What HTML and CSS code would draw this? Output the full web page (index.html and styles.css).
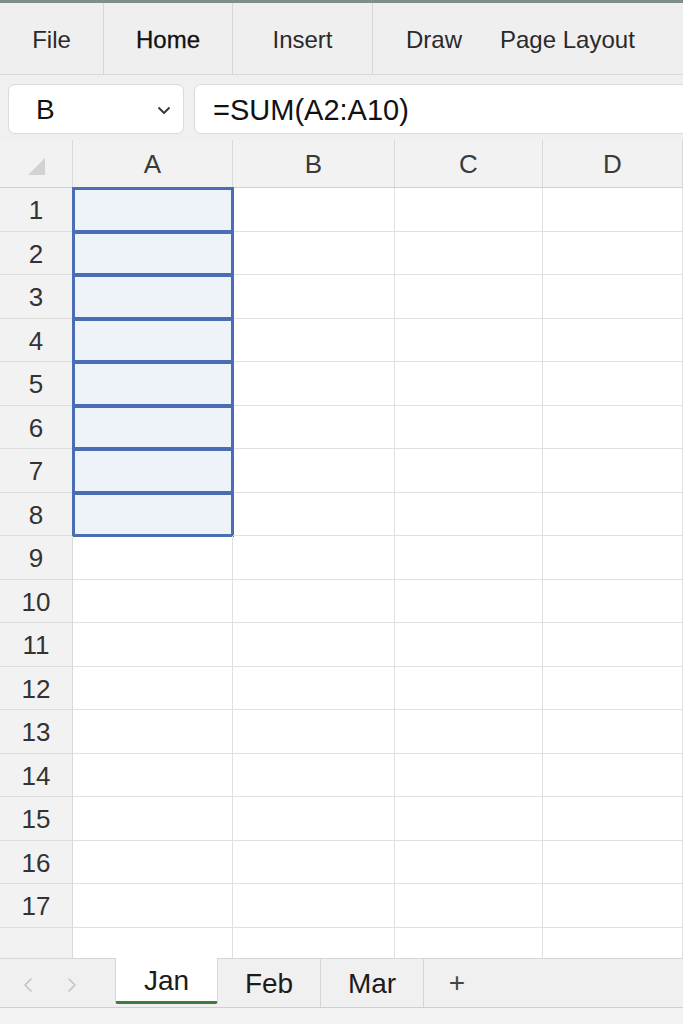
FILE: index.html
```html
<!DOCTYPE html>
<html lang="en">

	<head>
		<meta charset="UTF-8" />
		<meta name="viewport" content="width=device-width, initial-scale=1.0" />
		<title>Sheet</title>
		<link rel="stylesheet" href="styles.css">
	</head>

	<body>
		<div class="app">
			<div class="top-line"></div>

			<div class="ribbon">
				<div class="rtab w-file">File</div>
				<div class="rtab w-home">Home</div>
				<div class="rtab w-insert">Insert</div>
				<div class="rtab plain draw">Draw</div>
				<div class="rtab plain layout">Page Layout</div>
			</div>

			<div class="formula-bar">
				<div class="name-box">
					<span>B</span>
					<svg width="14" height="9" viewBox="0 0 14 9">
						<path d="M2 2 L7 7 L12 2" fill="none" stroke="#333" stroke-width="1.8" stroke-linecap="round" stroke-linejoin="round" />
					</svg>
				</div>
				<div class="formula-box">=SUM(A2:A10)</div>
			</div>

			<div class="grid" id="grid">
				<div class="hcell corner">
					<svg width="17" height="17" viewBox="0 0 17 17">
						<path d="M17 0 L17 17 L0 17 Z" fill="#d2d2d2" />
					</svg>
				</div>
				<div class="hcell">A</div>
				<div class="hcell">B</div>
				<div class="hcell">C</div>
				<div class="hcell">D</div>
			</div>

			<div class="tabs">
				<div class="nav">
					<svg width="12" height="18" viewBox="0 0 12 18">
						<path d="M9 3 L3 9 L9 15" fill="none" stroke="#c2c2c2" stroke-width="1.6" stroke-linecap="round" stroke-linejoin="round" />
					</svg>
					<svg width="12" height="18" viewBox="0 0 12 18">
						<path d="M3 3 L9 9 L3 15" fill="none" stroke="#c2c2c2" stroke-width="1.6" stroke-linecap="round" stroke-linejoin="round" />
					</svg>
				</div>
				<div class="stab active">Jan</div>
				<div class="stab">Feb</div>
				<div class="stab">Mar</div>
				<div class="add">+</div>
			</div>
			<div class="status"></div>
		</div>

		<script>
			// build the 17 rows + one partial row
			let grid = document.getElementById("grid");
			for (let r = 1; r <= 18; r++) {
				let head = document.createElement("div");
				head.className = "rhead" + (r == 18 ? " last" : "");
				head.textContent = r < 18 ? r : "";
				grid.append(head);
				for (let c = 0; c < 4; c++) {
					let cell = document.createElement("div");
					cell.className = "cell" + (r == 18 ? " last" : "");
					if (c == 0 && r <= 8) {
						cell.classList.add("sel");
					}
					grid.append(cell);
				}
			}
		</script>
	</body>

</html>
```

FILE: styles.css
```css
* {
	box-sizing: border-box;
}

body {
	margin: 0;
	font-family: "Liberation Sans", Arial, sans-serif;
	color: #222;
	background: #fff;
	overflow: hidden;
}

.app {
	width: 683px;
	height: 1024px;
	display: flex;
	flex-direction: column;
}

.top-line {
	height: 3px;
	background: #7d8f87;
}

.ribbon {
	height: 72px;
	display: flex;
	align-items: stretch;
	background: #efefef;
	border-bottom: 1px solid #d8d8d8;
}

.rtab {
	display: flex;
	align-items: center;
	justify-content: center;
	font-size: 24px;
	color: #2a2a2a;
	border-right: 1px solid #d6d6d6;
	padding-top: 3px;
}

.w-file {
	width: 104px;
}

.w-home {
	width: 129px;
	color: #111;
	-webkit-text-stroke: 0.3px #111;
}

.w-insert {
	width: 140px;
}

.rtab.plain {
	border-right: none;
}

.draw {
	padding-left: 33px;
}

.layout {
	padding-left: 38px;
}

.formula-bar {
	height: 65px;
	display: flex;
	padding: 9px 0 6px 8px;
	gap: 10px;
	background: #f0f0f0;
}

.name-box {
	width: 176px;
	display: flex;
	align-items: center;
	justify-content: space-between;
	padding: 2px 12px 0 27px;
	background: #fff;
	border: 1px solid #dadada;
	border-radius: 7px;
	font-size: 28px;
	color: #111;
}

.formula-box {
	flex: 1;
	display: flex;
	align-items: center;
	padding: 2px 0 0 18px;
	margin-right: -10px;
	background: #fff;
	border: 1px solid #dadada;
	border-radius: 7px;
	font-size: 29px;
	color: #111;
}

.grid {
	display: grid;
	grid-template-columns: 73px 160px 162px 148px 1fr;
	grid-template-rows: 48px repeat(17, 43.5px) 30.5px;
	background: #fff;
}

.hcell {
	display: flex;
	align-items: center;
	justify-content: center;
	background: #f2f2f2;
	border-right: 1px solid #d9d9d9;
	border-bottom: 1px solid #cfcfcf;
	font-size: 26px;
	color: #3a3a3a;
	padding-top: 2px;
}

.corner {
	justify-content: flex-end;
	align-items: flex-end;
	padding: 0 27px 12px 0;
}

.rhead {
	display: flex;
	align-items: center;
	justify-content: center;
	background: #f2f2f2;
	border-right: 1px solid #d9d9d9;
	border-bottom: 1px solid #dcdcdc;
	font-size: 26px;
	color: #333;
	padding-top: 3px;
}

.cell {
	border-right: 1px solid #e0e0e0;
	border-bottom: 1px solid #e0e0e0;
}

.rhead.last,
.cell.last {
	border-bottom: none;
}

.cell.sel {
	background: #eef2f9;
	outline: 3px solid #4a6db6;
	outline-offset: -2px;
}

.tabs {
	height: 50px;
	display: flex;
	align-items: stretch;
	background: #f0f0f0;
	border-top: 1px solid #d6d6d6;
	border-bottom: 1px solid #d0d0d0;
}

.nav {
	width: 115px;
	display: flex;
	align-items: center;
	gap: 32px;
	padding: 4px 0 0 22px;
}

.stab {
	width: 103px;
	display: flex;
	align-items: center;
	justify-content: center;
	font-size: 28px;
	color: #1c1c1c;
	border-right: 1px solid #d6d6d6;
	padding-top: 2px;
}

.stab.active {
	background: #fff;
	border-left: 1px solid #d6d6d6;
	border-bottom: 3px solid #3e7b3f;
	border-radius: 0 0 3px 3px;
	margin-top: -1px;
	margin-bottom: 3px;
}

.add {
	width: 66px;
	display: flex;
	align-items: center;
	justify-content: center;
	font-size: 28px;
	color: #444;
}

.status {
	flex: 1;
	background: #f3f3f3;
}
```
